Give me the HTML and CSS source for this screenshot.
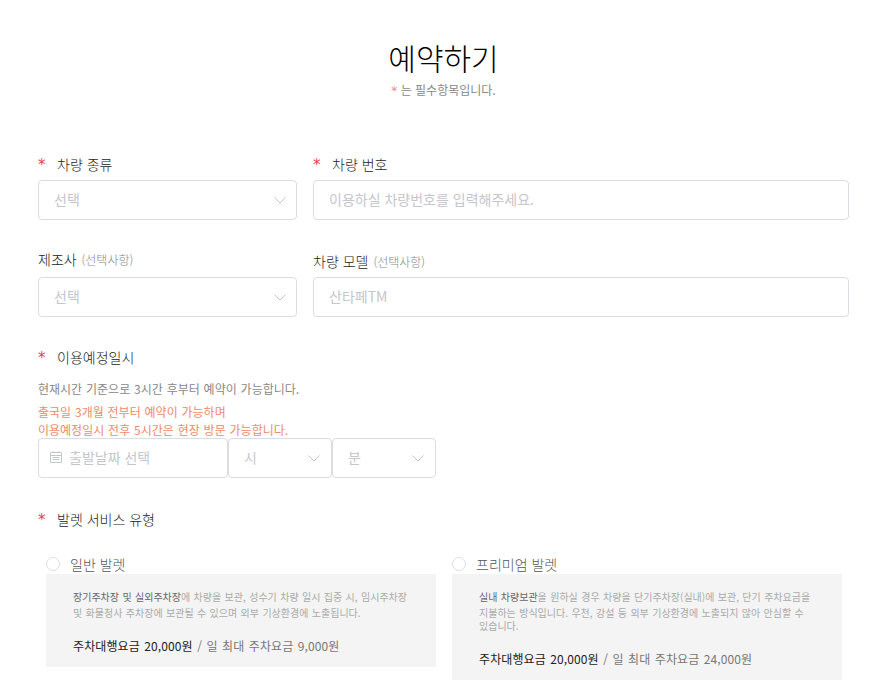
FILE: index.html
```html
<!DOCTYPE html>
<html lang="ko">
<head>
  <meta charset="UTF-8">
  <meta name="viewport" content="width=device-width, initial-scale=1">
  <title>예약하기</title>
  <link rel="stylesheet" href="styles.css">
</head>
<body>

  <div class="page">
    <div class="page-head">
      <h1>예약하기</h1>
      <p><span class="star">*</span> 는 필수항목입니다.</p>
    </div>

    <div class="form-row row-first">
      <div class="col-left">
        <label class="field-label"><span class="star">*</span>차량 종류</label>
        <div class="select-box">선택
          <svg class="chevron" width="12" height="7" viewBox="0 0 12 7"><path d="M.5.5L6 6 11.5.5"/></svg>
        </div>
      </div>
      <div class="col-right">
        <label class="field-label"><span class="star">*</span>차량 번호</label>
        <div class="select-box">이용하실 차량번호를 입력해주세요.</div>
      </div>
    </div>

    <div class="form-row row-second">
      <div class="col-left">
        <label class="field-label label-tall">제조사 <small>(선택사항)</small></label>
        <div class="select-box">선택
          <svg class="chevron" width="12" height="7" viewBox="0 0 12 7"><path d="M.5.5L6 6 11.5.5"/></svg>
        </div>
      </div>
      <div class="col-right">
        <label class="field-label label-tall label-low">차량 모델 <small>(선택사항)</small></label>
        <div class="select-box">산타페TM</div>
      </div>
    </div>

    <div class="section-date">
      <label class="field-label"><span class="star">*</span>이용예정일시</label>
      <p class="note">현재시간 기준으로 3시간 후부터 예약이 가능합니다.</p>
      <p class="note-warn">출국일 3개월 전부터 예약이 가능하며<br>이용예정일시 전후 5시간은 현장 방문 가능합니다.</p>
      <div class="date-row">
        <div class="select-box date-box">
          <svg class="cal" width="14" height="14" viewBox="0 0 14 14"><path d="M1.5 2.5h11v10h-11zM1.5 5.5h11M3.5 7.5h7M3.5 9.5h7M4 1v1.5M10 1v1.5"/></svg>
          출발날짜 선택
        </div>
        <div class="select-box time-box">시
          <svg class="chevron" width="12" height="7" viewBox="0 0 12 7"><path d="M.5.5L6 6 11.5.5"/></svg>
        </div>
        <div class="select-box time-box">분
          <svg class="chevron" width="12" height="7" viewBox="0 0 12 7"><path d="M.5.5L6 6 11.5.5"/></svg>
        </div>
      </div>
    </div>

    <div class="section-valet">
      <label class="field-label"><span class="star">*</span>발렛 서비스 유형</label>
      <div class="valet-list">
        <div class="valet-item">
          <div class="valet-title"><span class="radio"></span>일반 발렛</div>
          <div class="valet-info">
            <p class="valet-desc"><b>장기주차장 및 실외주차장</b>에 차량을 보관, 성수기 차량 일시 집중 시, 임시주차장 및 화물청사 주차장에 보관될 수 있으며 외부 기상환경에 노출됩니다.</p>
            <p class="valet-price"><b>주차대행요금 20,000원</b> / 일 최대 주차요금 9,000원</p>
          </div>
        </div>
        <div class="valet-item">
          <div class="valet-title"><span class="radio"></span>프리미엄 발렛</div>
          <div class="valet-info">
            <p class="valet-desc"><b>실내 차량보관</b>을 원하실 경우 차량을 단기주차장(실내)에 보관, 단기 주차요금을 지불하는 방식입니다. 우천, 강설 등 외부 기상환경에 노출되지 않아 안심할 수 있습니다.</p>
            <p class="valet-price"><b>주차대행요금 20,000원</b> / 일 최대 주차요금 24,000원</p>
          </div>
        </div>
      </div>
    </div>
  </div>

</body>
</html>
```

FILE: styles.css
```css
* {
  box-sizing: border-box;
}

html, body {
  height: 100%;
  overflow: hidden;
}

body {
  margin: 0;
  background: #fff;
  color: #222;
  font-family: "Noto Sans CJK KR", "Noto Sans", sans-serif;
  font-weight: 300;
}

p {
  margin: 0;
}

.page {
  padding: 0 20px 0 38px;
}

.page-head {
  padding-top: 35px;
  text-align: center;
}

.page-head h1 {
  margin: 0;
  font-size: 30px;
  font-weight: 300;
  line-height: 44px;
  color: #000;
}

.page-head p {
  margin-top: 2px;
  font-size: 12px;
  line-height: 18px;
  color: #888;
  font-weight: 400;
}

.star {
  color: #e8424f;
  font-family: "DejaVu Sans", sans-serif;
  font-weight: 400;
}

.page-head .star {
  color: #ee8a90;
}

.form-row {
  display: flex;
  gap: 16px;
}

.row-first {
  margin-top: 55px;
}

.row-second {
  margin-top: 29px;
}

.col-left {
  width: 259px;
  flex: none;
}

.col-right {
  flex: 1;
}

.field-label {
  display: block;
  height: 25px;
  font-size: 14px;
  line-height: 18px;
  color: #222;
}

.label-tall {
  height: 28px;
  line-height: 20px;
}

.label-low {
  padding-top: 2px;
}

.section-valet .field-label {
  line-height: 20px;
}

.field-label .star {
  display: inline-block;
  width: 19px;
  font-size: 15px;
}

.field-label small {
  margin-left: 1px;
  font-size: 12px;
  color: #888;
}

.select-box {
  display: flex;
  align-items: center;
  position: relative;
  height: 40px;
  padding: 0 15px 2px;
  border: 1px solid #dcdde3;
  border-radius: 4px;
  font-size: 14px;
  font-weight: 400;
  color: #c4c6cc;
}

.chevron {
  position: absolute;
  right: 10px;
  top: 16px;
  fill: none;
  stroke: #c4c6cc;
  stroke-width: 1;
}

.section-date {
  margin-top: 31px;
}

.note {
  margin-top: 7px;
  font-size: 12px;
  line-height: 18px;
  font-weight: 400;
  word-spacing: 0.5px;
  color: #888;
}

.note-warn {
  margin-top: 5px;
  font-size: 12px;
  line-height: 18px;
  font-weight: 400;
  word-spacing: 0.5px;
  color: #f08a68;
}

.date-row {
  display: flex;
  margin-top: -1px;
}

.date-box {
  width: 190px;
  padding-left: 10px;
  gap: 6px;
}

.cal {
  fill: none;
  stroke: #c4c6cc;
  stroke-width: 1;
}

.time-box {
  width: 104px;
}

.time-box .chevron {
  right: 11px;
}

.section-valet {
  margin-top: 31px;
}

.valet-list {
  display: flex;
  align-items: flex-start;
  gap: 16px;
  margin-top: 19px;
  margin-left: 8px;
}

.valet-item {
  width: 390px;
}

.valet-title {
  display: flex;
  align-items: center;
  gap: 10px;
  height: 21px;
  font-size: 14px;
  color: #555;
}

.radio {
  width: 14px;
  height: 14px;
  border: 1px solid #dcdde3;
  border-radius: 50%;
}

.valet-info {
  padding: 13px 27px 10px;
  background: #f4f4f4;
}

.valet-desc {
  font-size: 10px;
  line-height: 13px;
  font-weight: 400;
  word-spacing: 0.6px;
  color: #aaa;
}

/* 첫 줄만 줄 간격이 더 넓다 */
.valet-desc::first-line {
  line-height: 19px;
}

.valet-desc b {
  font-weight: 400;
  color: #666;
}

.valet-price {
  margin-top: 16px;
  font-size: 12px;
  line-height: 22px;
  word-spacing: 1px;
  letter-spacing: 0.1px;
  font-weight: 400;
  color: #777;
}

.valet-price b {
  font-weight: 400;
  color: #222;
}
```
